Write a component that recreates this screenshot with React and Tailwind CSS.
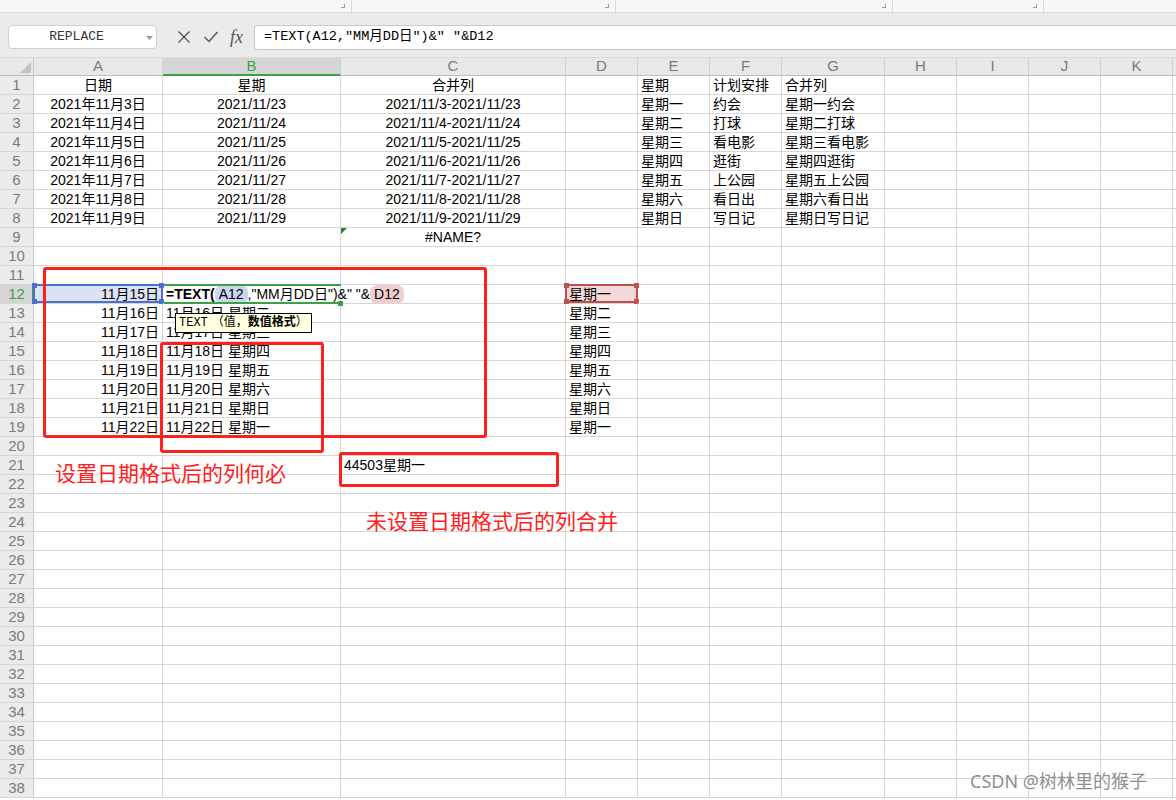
const SANS = "'Liberation Sans','Noto Sans CJK SC',sans-serif"
const MONO = "'Liberation Mono','Noto Sans CJK SC',monospace"

const COLS = ['A', 'B', 'C', 'D', 'E', 'F', 'G', 'H', 'I', 'J', 'K']
const WD = ['一', '二', '三', '四', '五', '六', '日']
const PLANS = ['约会', '打球', '看电影', '逛街', '上公园', '看日出', '写日记']

function buildData() {
  const d = {}
  const set = (r, c, t, align = 'left') => {
    d[r] = d[r] || {}
    d[r][c] = { t, align }
  }
  set(1, 'A', '日期', 'center')
  set(1, 'B', '星期', 'center')
  set(1, 'C', '合并列', 'center')
  set(1, 'E', '星期')
  set(1, 'F', '计划安排')
  set(1, 'G', '合并列')
  for (let i = 0; i < 7; i++) {
    const r = i + 2
    set(r, 'A', `2021年11月${3 + i}日`, 'center')
    set(r, 'B', `2021/11/${23 + i}`, 'center')
    set(r, 'C', `2021/11/${3 + i}-2021/11/${23 + i}`, 'center')
    set(r, 'E', `星期${WD[i]}`)
    set(r, 'F', PLANS[i])
    set(r, 'G', `星期${WD[i]}${PLANS[i]}`)
  }
  set(9, 'C', '#NAME?', 'center')
  for (let i = 1; i < 8; i++) {
    const r = 12 + i
    const w = WD[i % 7]
    set(r, 'A', `11月${15 + i}日`, 'right')
    set(r, 'B', `11月${15 + i}日 星期${w}`)
    set(r, 'D', `星期${w}`)
  }
  set(21, 'C', '44503星期一')
  return d
}

const DATA = buildData()

function Corners({ color }) {
  const sq = 'absolute w-[5px] h-[5px]'
  return (
    <>
      <span className={`${sq} -left-[3px] -top-[3px]`} style={{ background: color }} />
      <span className={`${sq} -right-[3px] -top-[3px]`} style={{ background: color }} />
      <span className={`${sq} -left-[3px] -bottom-[3px]`} style={{ background: color }} />
      <span className={`${sq} -right-[3px] -bottom-[3px]`} style={{ background: color }} />
    </>
  )
}

function Cell({ r, c }) {
  const cell = DATA[r] && DATA[r][c]
  const base =
    'relative h-[19px] border-r border-b border-[#d6d6d6] px-[3px] flex items-center whitespace-nowrap text-[14px] leading-[19px] text-black'

  if (r === 12 && c === 'A') {
    return (
      <div className={`${base} justify-end bg-[#dbe2f4]`}>
        <span>11月15日</span>
        <div className="absolute -left-[1px] -top-[1px] -right-[1px] bottom-0 border-2 border-[#4a6fd1]">
          <Corners color="#4a6fd1" />
        </div>
      </div>
    )
  }
  if (r === 12 && c === 'B') {
    return (
      <div className={`${base} z-20`}>
        <span className="font-bold">=TEXT(</span>
        <span className="bg-[#c9d5f1] rounded-[7px] px-[4px]">A12</span>
        <span>,"MM</span>
        <span className="inline-block w-px h-[15px] bg-black" />
        <span>月DD日")&amp;" "&amp;</span>
        <span className="bg-[#f1cfcf] rounded-[7px] px-[4px]">D12</span>
        <span className="absolute left-[1px] -right-[1px] -top-[1px] h-[2px] bg-[#3aa147]" />
        <span className="absolute left-[1px] -right-[1px] -bottom-[1px] h-[2px] bg-[#3aa147]" />
        <span className="absolute -right-[3px] -bottom-[3px] w-[5px] h-[5px] bg-[#3aa147]" />
      </div>
    )
  }
  if (r === 12 && c === 'D') {
    return (
      <div className={`${base} bg-[#f3d9d9]`}>
        <span>星期一</span>
        <div className="absolute -left-[1px] -top-[1px] -right-[1px] bottom-0 border-2 border-[#c0504d]">
          <Corners color="#c0504d" />
        </div>
      </div>
    )
  }

  const just =
    cell && cell.align === 'center'
      ? 'justify-center'
      : cell && cell.align === 'right'
        ? 'justify-end'
        : 'justify-start'
  return (
    <div className={`${base} ${just}`}>
      {r === 9 && c === 'C' && (
        <svg className="absolute left-0 top-0" width="6" height="6" viewBox="0 0 6 6">
          <polygon points="0,0 6,0 0,6" fill="#1e8a2e" />
        </svg>
      )}
      {cell ? cell.t : null}
    </div>
  )
}

function RibbonSeg({ w, last }) {
  return (
    <div
      className={`relative h-full ${last ? 'flex-1' : 'border-r border-[#dadada]'}`}
      style={last ? undefined : { width: w }}
    >
      {!last && <span className="absolute right-[6px] top-[4px] w-[4px] h-[4px] border-r border-b border-[#9a9a9a]" />}
    </div>
  )
}

export default function App() {
  const rows = Array.from({ length: 38 }, (_, i) => i + 1)
  return (
    <div className="relative w-[1176px] h-[800px] overflow-hidden bg-white" style={{ fontFamily: SANS }}>
      {/* ribbon remnant */}
      <div className="h-[13px] bg-[#f7f7f7] flex border-b border-[#d9d9d9] shadow-[0_1px_2px_rgba(0,0,0,0.12)]">
        <RibbonSeg w="352px" />
        <RibbonSeg w="264px" />
        <RibbonSeg w="277px" />
        <RibbonSeg w="151px" />
        <RibbonSeg last />
      </div>

      {/* formula bar */}
      <div className="h-[44px] bg-[#ebebeb] pt-[12px] flex items-start">
        <div className="ml-[8px] w-[149px] h-[24px] bg-white border border-[#cfcfcf] rounded-[4px] relative flex items-center justify-center">
          <span className="text-[13px] text-[#333] pr-[12px]" style={{ fontFamily: MONO }}>REPLACE</span>
          <svg className="absolute right-[3px] top-[10px]" width="7" height="4" viewBox="0 0 7 4">
            <polygon points="0,0 7,0 3.5,4" fill="#9a9a9a" />
          </svg>
        </div>
        <div className="w-[97px] h-[24px] flex items-center">
          <svg className="ml-[20px]" width="14" height="14" viewBox="0 0 14 14">
            <path d="M1.5 1.5 L12.5 12.5 M12.5 1.5 L1.5 12.5" stroke="#555" strokeWidth="1.3" fill="none" />
          </svg>
          <svg className="ml-[12px]" width="16" height="14" viewBox="0 0 16 14">
            <path d="M1.5 7 L6 11.5 L14.5 2" stroke="#555" strokeWidth="1.4" fill="none" />
          </svg>
          <span className="ml-[11px] text-[18px] italic text-[#555] leading-none" style={{ fontFamily: "'Liberation Serif',serif" }}>
            fx
          </span>
        </div>
        <div className="flex-1 h-[25px] bg-white border-y border-l border-[#c9c9c9] rounded-l-[4px] flex items-center pl-[9px]">
          <span className="text-[13.5px] text-black whitespace-nowrap" style={{ fontFamily: MONO }}>
            =TEXT(A12,″MM月DD日″)&amp;″ ″&amp;D12
          </span>
        </div>
      </div>

      {/* sheet */}
      <div className="grid grid-cols-[34px_129px_178px_225px_72px_72px_72px_103px_72px_72px_72px_72px_1fr]">
        {/* column header */}
        <div className="relative h-[19px] bg-[#e8e8e8] border-t border-[#dadada] border-r border-r-[#c9c9c9] border-b border-b-[#bdbdbd]">
          <svg className="absolute left-[20px] top-[4px]" width="11" height="11" viewBox="0 0 11 11">
            <polygon points="11,0 11,11 0,11" fill="#c2c2c2" />
          </svg>
        </div>
        {COLS.map((c) => (
          <div
            key={c}
            className={`h-[19px] border-t border-[#dadada] border-r border-r-[#d0d0d0] flex items-center justify-center text-[15px] ${
              c === 'B'
                ? 'bg-[#d5d5d5] text-[#3aa147] border-b-2 border-b-[#3aa147]'
                : 'bg-[#e8e8e8] text-[#7b7b7b] border-b border-b-[#bdbdbd]'
            }`}
          >
            {c}
          </div>
        ))}
        <div className="h-[19px] bg-[#e8e8e8] border-t border-[#dadada] border-b border-b-[#bdbdbd]" />

        {rows.map((r) => (
          <div key={r} className="contents">
            <div
              className={`relative h-[19px] border-r border-[#c9c9c9] border-b border-b-[#d6d6d6] flex items-center justify-center text-[15px] ${
                r === 12 ? 'bg-[#d5d5d5] text-[#3aa147]' : 'bg-[#ebebeb] text-[#7b7b7b]'
              }`}
            >
              {r}
              {r === 12 && <span className="absolute -right-[1px] top-0 bottom-0 w-[2px] bg-[#3aa147]" />}
            </div>
            {COLS.map((c) => (
              <Cell key={c} r={r} c={c} />
            ))}
            <div className="h-[19px] border-b border-[#d6d6d6]" />
          </div>
        ))}
      </div>

      {/* tooltip */}
      <div className="absolute left-[175px] top-[313px] h-[20px] px-[3px] bg-[#ffffe1] border border-black flex items-center text-[12px] text-black whitespace-nowrap z-30" style={{ fontFamily: MONO }}>
        TEXT<span className="ml-[4px]">（值，</span><span className="font-bold">数值格式</span>）
      </div>

      {/* annotations */}
      <div className="absolute left-[43px] top-[267px] w-[444px] h-[171px] border-[3px] border-[#ff1f1f] rounded-[3px] z-30" />
      <div className="absolute left-[160px] top-[342px] w-[164px] h-[111px] border-[3px] border-[#ff1f1f] rounded-[3px] z-30" />
      <div className="absolute left-[339px] top-[452px] w-[220px] h-[35px] border-[3px] border-[#ff1f1f] rounded-[3px] z-30" />
      <div className="absolute left-[55px] top-[460px] text-[21px] leading-[28px] text-[#ff2020] whitespace-nowrap z-30">
        设置日期格式后的列何必
      </div>
      <div className="absolute left-[366px] top-[508px] text-[21px] leading-[28px] text-[#ff2020] whitespace-nowrap z-30">
        未设置日期格式后的列合并
      </div>

      {/* watermark */}
      <div
        className="absolute left-[970px] top-[768px] text-[18px] leading-[26px] text-[#8e8e8e] whitespace-nowrap z-30"
        style={{ fontFamily: "'Noto Sans','Noto Sans CJK SC',sans-serif", textShadow: '0 0 2px #fff' }}
      >
        CSDN @树林里的猴子
      </div>
    </div>
  )
}
